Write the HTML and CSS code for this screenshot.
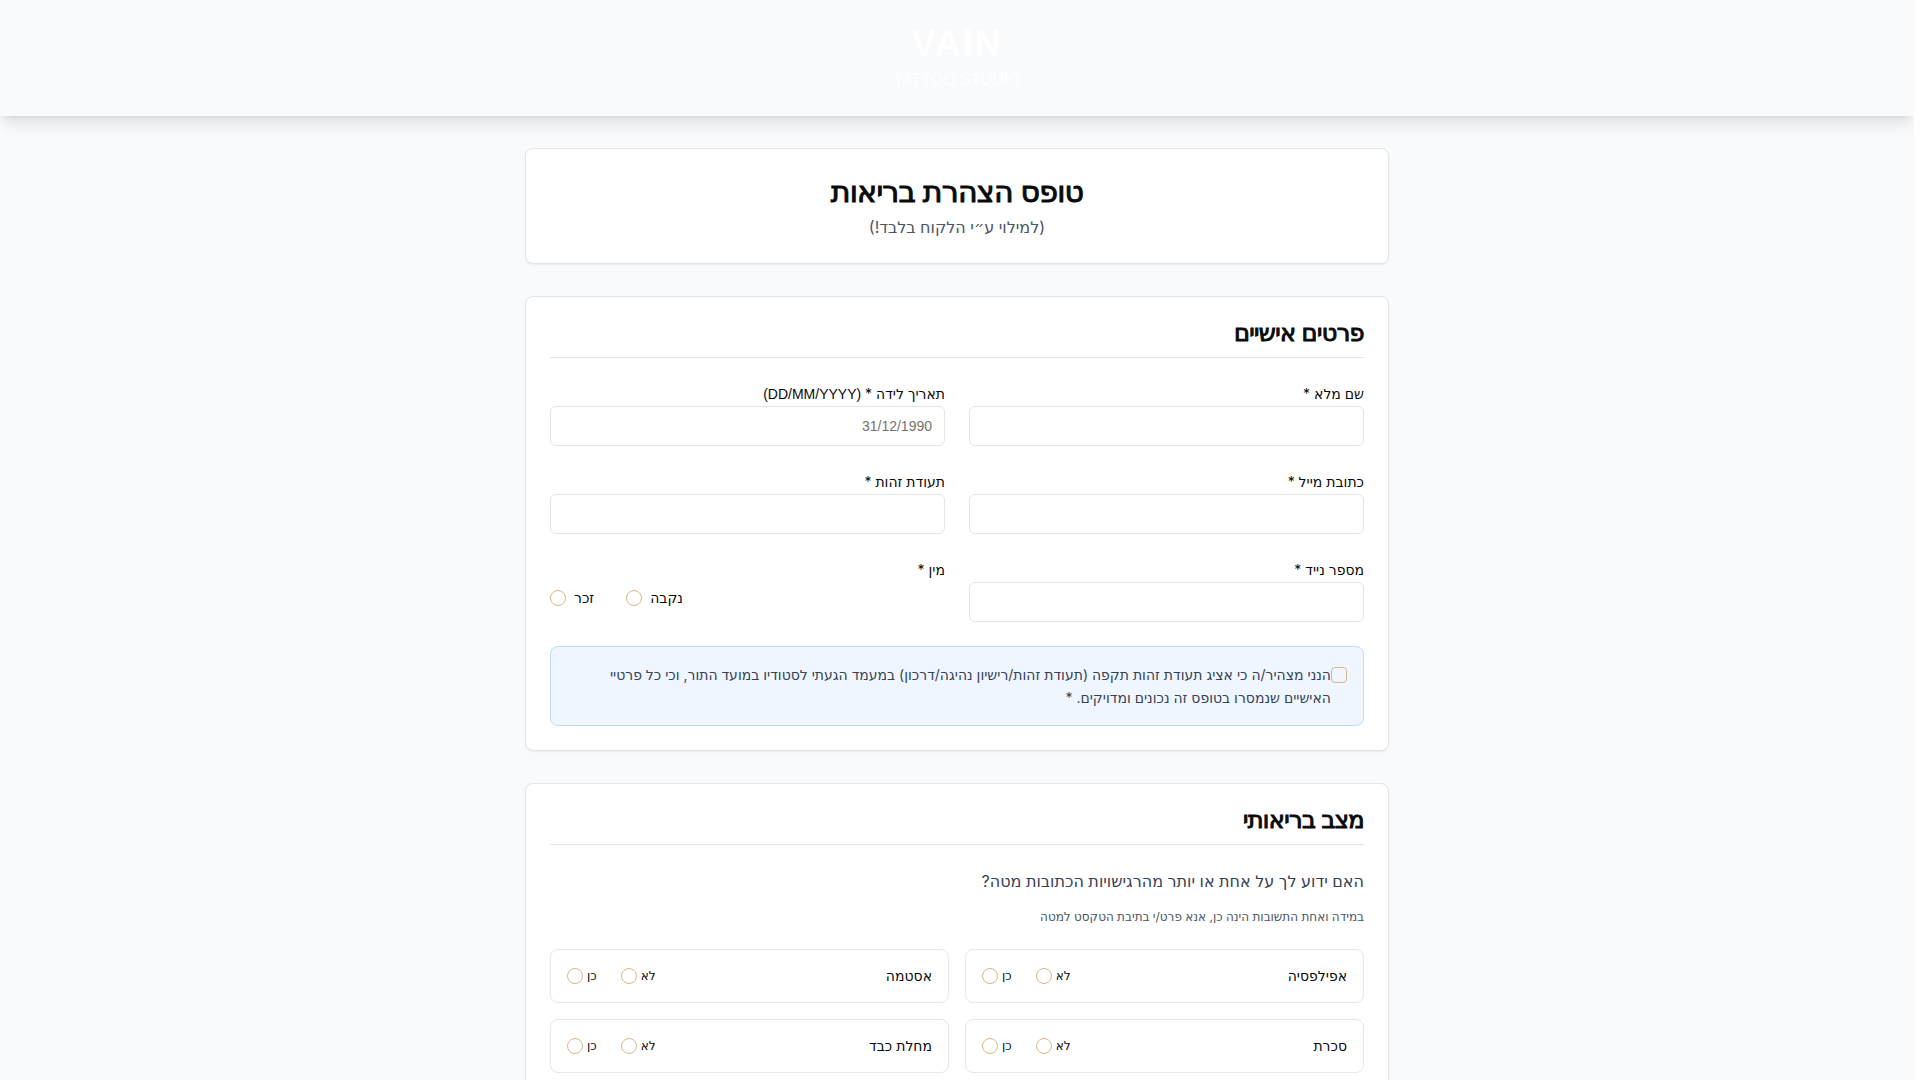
FILE: index.html
```html
<!DOCTYPE html>
<html lang="he" dir="rtl">
<head>
  <meta charset="UTF-8">
  <meta name="viewport" content="width=device-width, initial-scale=1.0">
  <title>VAIN Tattoo Studio</title>
  <link rel="stylesheet" href="styles.css">
</head>
<body>
  <header class="site-header">
    <h1 class="brand">VAIN</h1>
    <p class="brand-sub">TATTOO STUDIO</p>
  </header>

  <main class="container">
    <section class="card intro">
      <h2 class="intro-title">טופס הצהרת בריאות</h2>
      <p class="intro-note">(למילוי ע״י הלקוח בלבד!)</p>
    </section>

    <form class="form">
      <section class="card">
        <h3 class="section-title">פרטים אישיים</h3>
        <div class="fields">
          <div class="field">
            <label for="fullName">שם מלא *</label>
            <input class="text-input" type="text" id="fullName">
          </div>
          <div class="field">
            <label for="birthDate">תאריך לידה * <span class="latin">(DD/MM/YYYY)</span></label>
            <input class="text-input" type="text" id="birthDate" placeholder="31/12/1990">
          </div>
          <div class="field">
            <label for="email">כתובת מייל *</label>
            <input class="text-input" type="email" id="email">
          </div>
          <div class="field">
            <label for="idNumber">תעודת זהות *</label>
            <input class="text-input" type="text" id="idNumber">
          </div>
          <div class="field">
            <label for="phone">מספר נייד *</label>
            <input class="text-input" type="tel" id="phone">
          </div>
          <div class="field" role="radiogroup" aria-labelledby="genderLabel">
            <span id="genderLabel">מין *</span>
            <div class="gender" dir="ltr">
              <span class="option"><input class="radio" type="radio" name="gender" id="male"><label for="male">זכר</label></span>
              <span class="option"><input class="radio" type="radio" name="gender" id="female"><label for="female">נקבה</label></span>
            </div>
          </div>
        </div>
        <div class="declare">
          <input class="checkbox" type="checkbox" id="declare">
          <label for="declare">הנני מצהיר/ה כי אציג תעודת זהות תקפה (תעודת זהות/רישיון נהיגה/דרכון) במעמד הגעתי לסטודיו במועד התור, וכי כל פרטיי האישיים שנמסרו בטופס זה נכונים ומדויקים. *</label>
        </div>
      </section>

      <section class="card">
        <h3 class="section-title">מצב בריאותי</h3>
        <p class="question">האם ידוע לך על אחת או יותר מהרגישויות הכתובות מטה?</p>
        <p class="hint">במידה ואחת התשובות הינה כן, אנא פרט/י בתיבת הטקסט למטה</p>
        <div class="conditions">
          <div class="condition" role="radiogroup" aria-labelledby="epilepsy">
            <span id="epilepsy">אפילפסיה</span>
            <div class="answers" dir="ltr">
              <span class="answer"><input class="radio" type="radio" name="epilepsy" id="epilepsyYes"><label for="epilepsyYes">כן</label></span>
              <span class="answer"><input class="radio" type="radio" name="epilepsy" id="epilepsyNo"><label for="epilepsyNo">לא</label></span>
            </div>
          </div>
          <div class="condition" role="radiogroup" aria-labelledby="asthma">
            <span id="asthma">אסטמה</span>
            <div class="answers" dir="ltr">
              <span class="answer"><input class="radio" type="radio" name="asthma" id="asthmaYes"><label for="asthmaYes">כן</label></span>
              <span class="answer"><input class="radio" type="radio" name="asthma" id="asthmaNo"><label for="asthmaNo">לא</label></span>
            </div>
          </div>
          <div class="condition" role="radiogroup" aria-labelledby="diabetes">
            <span id="diabetes">סכרת</span>
            <div class="answers" dir="ltr">
              <span class="answer"><input class="radio" type="radio" name="diabetes" id="diabetesYes"><label for="diabetesYes">כן</label></span>
              <span class="answer"><input class="radio" type="radio" name="diabetes" id="diabetesNo"><label for="diabetesNo">לא</label></span>
            </div>
          </div>
          <div class="condition" role="radiogroup" aria-labelledby="liver">
            <span id="liver">מחלת כבד</span>
            <div class="answers" dir="ltr">
              <span class="answer"><input class="radio" type="radio" name="liver" id="liverYes"><label for="liverYes">כן</label></span>
              <span class="answer"><input class="radio" type="radio" name="liver" id="liverNo"><label for="liverNo">לא</label></span>
            </div>
          </div>
        </div>
      </section>
    </form>
  </main>
</body>
</html>
```
FILE: styles.css
```css
* { margin: 0; padding: 0; box-sizing: border-box; }
html {
  background: #fff;
}
body {
  margin-right: 6px;
  font-family: Inter, "DejaVu Sans", sans-serif;
  font-size: 16px;
  line-height: 24px;
  background: #f9fafb;
  color: #0a0a0a;
  min-height: 100vh;
  overflow-x: clip;
}
.latin,
.site-header {
  font-family: "Liberation Sans", Arial, sans-serif;
}
.site-header {
  padding: 24px;
  text-align: center;
  color: #fff;
  box-shadow: 0 10px 15px -3px rgba(0, 0, 0, 0.1), 0 4px 6px -4px rgba(0, 0, 0, 0.1);
}
.brand {
  margin-bottom: 4px;
  font-size: 36px;
  line-height: 40px;
  font-weight: 700;
  letter-spacing: 0.05em;
}
.container {
  max-width: 896px;
  margin: 0 auto;
  padding: 32px 16px;
}
.form {
  display: flex;
  flex-direction: column;
  gap: 32px;
}
.card {
  padding: 24px;
  background: #fff;
  border: 1px solid #e5e5e5;
  border-radius: 8px;
  box-shadow: 0 1px 2px rgba(0, 0, 0, 0.06);
}
.intro {
  margin-bottom: 32px;
  text-align: center;
}
.intro-title,
.section-title {
  font-weight: 400;
  letter-spacing: -0.025em;
  -webkit-text-stroke: 1px currentColor;
}
.intro-title {
  margin-bottom: 6px;
  font-size: 30px;
  line-height: 36px;
}
.intro-note {
  color: #4a5565;
}
.section-title {
  margin-bottom: 24px;
  padding-bottom: 12px;
  border-bottom: 1px solid #e5e5e5;
  font-size: 24px;
  line-height: 24px;
}
.fields {
  display: grid;
  grid-template-columns: 1fr 1fr;
  gap: 24px;
  font-size: 14px;
}
.field {
  display: flex;
  flex-direction: column;
}
.text-input {
  width: 100%;
  height: 40px;
  padding: 8px 12px;
  border: 1px solid #e5e5e5;
  border-radius: 6px;
  background: #fff;
  color: inherit;
  font-family: "Liberation Sans", Arial, sans-serif;
  font-size: 14px;
}
.text-input::placeholder {
  color: #78716c;
}
.gender {
  display: flex;
  gap: 32px;
  padding-top: 4px;
}
.option {
  display: flex;
  align-items: center;
  gap: 8px;
}
.radio,
.checkbox {
  appearance: none;
  flex: none;
  width: 16px;
  height: 16px;
  border: 1px solid #d9b88a;
  border-radius: 50%;
}
.checkbox {
  margin-top: 4px;
  border-radius: 4px;
}
.declare {
  display: flex;
  align-items: flex-start;
  margin-top: 24px;
  padding: 16px;
  background: #eff6ff;
  border: 1px solid #bedbff;
  border-radius: 8px;
  color: #364153;
  font-size: 14px;
  line-height: 23px;
}
.question {
  margin-bottom: 16px;
  color: #364153;
}
.hint {
  margin-bottom: 24px;
  color: #4a5565;
  font-size: 12px;
  line-height: 16px;
}
.conditions {
  display: grid;
  grid-template-columns: 1fr 1fr;
  gap: 16px;
}
.condition {
  display: flex;
  align-items: center;
  justify-content: space-between;
  padding: 16px;
  border: 1px solid #e5e7eb;
  border-radius: 8px;
  font-size: 14px;
  line-height: 20px;
}
.answers {
  display: flex;
  gap: 24px;
  font-size: 12px;
}
.answer {
  display: flex;
  align-items: center;
  gap: 4px;
}

@media (max-width: 768px) {
  .fields,
  .conditions {
    grid-template-columns: 1fr;
  }
}
```
